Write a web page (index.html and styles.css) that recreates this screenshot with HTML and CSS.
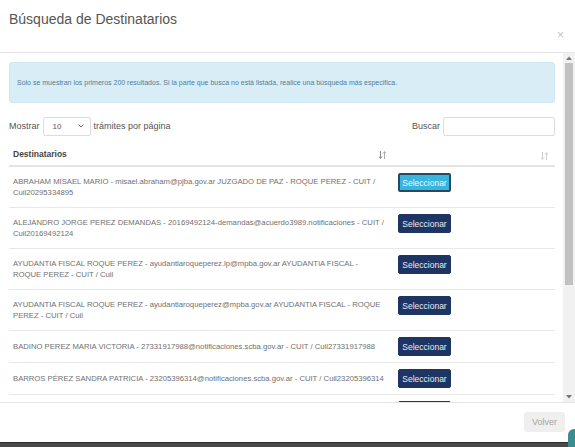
FILE: index.html
```html
<!DOCTYPE html>
<html lang="es">
<head>
<meta charset="utf-8">
<title>Búsqueda de Destinatarios</title>
<link rel="stylesheet" href="styles.css">
</head>
<body>
<div class="modal">
  <div class="modal-header">
    <h4 class="modal-title">Búsqueda de Destinatarios</h4>
    <span class="close">×</span>
  </div>
  <div class="modal-body-wrap">
    <div class="modal-body">
      <div class="alert">Solo se muestran los primeros 200 resultados. Si la parte que busca no está listada, realice una búsqueda más especifica.</div>
      <div class="controls">
        <div class="length">
          <span>Mostrar</span>
          <span class="select"><span>10</span>
            <svg class="chev" width="6" height="4" viewBox="0 0 6 4"><path d="M0.6 0.6 L3 3 L5.4 0.6" fill="none" stroke="#666" stroke-width="1"/></svg>
          </span>
          <span>trámites por página</span>
        </div>
        <div class="search">
          <span>Buscar</span>
          <span class="input"></span>
        </div>
      </div>
      <table class="table">
        <thead>
          <tr>
            <th class="col-name">Destinatarios
              <svg class="sort" width="7" height="8" viewBox="0 0 7 8"><path d="M1.5 0 V7 M0 5.5 L1.5 7.5 L3 5.5" fill="none" stroke="#888" stroke-width="1"/><path d="M5.5 8 V1 M4 2.5 L5.5 0.5 L7 2.5" fill="none" stroke="#aaa" stroke-width="1"/></svg>
            </th>
            <th class="col-btn">
              <svg class="sort light" width="7" height="8" viewBox="0 0 7 8"><path d="M1.5 0 V7 M0 5.5 L1.5 7.5 L3 5.5" fill="none" stroke="#d0d0d0" stroke-width="1"/><path d="M5.5 8 V1 M4 2.5 L5.5 0.5 L7 2.5" fill="none" stroke="#d0d0d0" stroke-width="1"/></svg>
            </th>
          </tr>
        </thead>
        <tbody>
          <tr>
            <td class="name">ABRAHAM MISAEL MARIO - misael.abraham@pjba.gov.ar JUZGADO DE PAZ - ROQUE PEREZ - CUIT / Cuil20295334895</td>
            <td class="act"><button class="btn btn-active">Seleccionar</button></td>
          </tr>
          <tr>
            <td class="name">ALEJANDRO JORGE PEREZ DEMANDAS - 20169492124-demandas@acuerdo3989.notificaciones - CUIT / Cuil20169492124</td>
            <td class="act"><button class="btn">Seleccionar</button></td>
          </tr>
          <tr>
            <td class="name">AYUDANTIA FISCAL ROQUE PEREZ - ayudantiaroqueperez.lp@mpba.gov.ar AYUDANTIA FISCAL - ROQUE PEREZ - CUIT / Cuil</td>
            <td class="act"><button class="btn">Seleccionar</button></td>
          </tr>
          <tr>
            <td class="name">AYUDANTIA FISCAL ROQUE PEREZ - ayudantiaroqueperez@mpba.gov.ar AYUDANTIA FISCAL - ROQUE PEREZ - CUIT / Cuil</td>
            <td class="act"><button class="btn">Seleccionar</button></td>
          </tr>
          <tr>
            <td class="name">BADINO PEREZ MARIA VICTORIA - 27331917988@notificaciones.scba.gov.ar - CUIT / Cuil27331917988</td>
            <td class="act"><button class="btn">Seleccionar</button></td>
          </tr>
          <tr>
            <td class="name">BARROS PÉREZ SANDRA PATRICIA - 23205396314@notificaciones.scba.gov.ar - CUIT / Cuil23205396314</td>
            <td class="act"><button class="btn">Seleccionar</button></td>
          </tr>
          <tr>
            <td class="name">&nbsp;</td>
            <td class="act"><span class="btn btn-peek"></span></td>
          </tr>
        </tbody>
      </table>
    </div>
    <div class="scrollbar">
      <span class="sb-btn"><svg width="6" height="4" viewBox="0 0 6 4"><path d="M0 4 L3 0.5 L6 4 Z" fill="#777"/></svg></span>
      <span class="sb-thumb"></span>
      <span class="sb-track"></span>
      <span class="sb-btn"><svg width="6" height="4" viewBox="0 0 6 4"><path d="M0 0 L3 3.5 L6 0 Z" fill="#777"/></svg></span>
    </div>
  </div>
  <div class="modal-footer">
    <button class="btn-default">Volver</button>
  </div>
</div>
<div class="widget"></div>
</body>
</html>
```
FILE: styles.css
```css
html, body {
  margin: 0;
  padding: 0;
}
body {
  background: #4a4a4a;
  font-family: "Liberation Sans", Arial, sans-serif;
  width: 575px;
  height: 447px;
  overflow: hidden;
  position: relative;
}
.modal {
  background: #fff;
  height: 443px;
  width: 575px;
  display: flex;
  flex-direction: column;
}
.modal-header {
  box-sizing: border-box;
  height: 53px;
  border-bottom: 1px solid #e5e5e5;
  display: flex;
  justify-content: space-between;
  align-items: flex-start;
  padding: 9px 11px 0 9px;
}
.modal-title {
  margin: 0;
  font-size: 14px;
  line-height: 20px;
  font-weight: normal;
  color: #555;
}
.close {
  margin-top: 20px;
  font-size: 12px;
  line-height: 12px;
  color: #c4c4c4;
}
.modal-body-wrap {
  display: flex;
  height: 349px;
}
.modal-body {
  flex: 1;
  padding: 9px 8px 0 9px;
  overflow: hidden;
}
.scrollbar {
  width: 12px;
  background: #f1f1f1;
  display: flex;
  flex-direction: column;
}
.sb-btn {
  height: 10px;
  display: flex;
  align-items: center;
  justify-content: center;
}
.sb-thumb {
  height: 222px;
  margin: 0 2px;
  background: #c1c1c1;
}
.sb-track {
  flex: 1;
}
.alert {
  box-sizing: border-box;
  height: 41px;
  display: flex;
  align-items: center;
  padding: 0 7px;
  background: #d9edf7;
  border: 1px solid #cfe8f2;
  border-radius: 3px;
  color: #4f7e98;
  font-size: 7px;
  margin-bottom: 13px;
}
.controls {
  display: flex;
  justify-content: space-between;
  align-items: center;
  height: 20px;
  font-size: 9px;
  color: #555;
}
.length, .search {
  display: flex;
  align-items: center;
  gap: 3px;
}
.select {
  box-sizing: border-box;
  width: 48px;
  height: 19px;
  border: 1px solid #ddd;
  border-radius: 2px;
  display: flex;
  align-items: center;
  justify-content: space-between;
  padding: 0 6px 0 9px;
  font-size: 8px;
  color: #555;
}
.input {
  box-sizing: border-box;
  width: 112px;
  height: 19px;
  border: 1px solid #ddd;
  border-radius: 2px;
}
.table {
  width: 546px;
  margin-top: 6px;
  border-collapse: collapse;
  table-layout: fixed;
}
.table th {
  text-align: left;
  font-size: 8.5px;
  line-height: 11px;
  font-weight: bold;
  color: #444;
  padding: 7px 4px 5px 4px;
  border-bottom: 2px solid #e4e4e4;
}
.col-name {
  width: 373px;
}
.col-btn {
  padding-right: 7px !important;
}
.sort {
  float: right;
  margin-top: 2px;
}
.table td {
  border-bottom: 1px solid #e8e8e8;
}
.name {
  font-size: 7.7px;
  line-height: 11px;
  color: #707070;
  padding: 9px 4px 9px 4px;
  vertical-align: middle;
}
.act {
  vertical-align: top;
  padding: 6px 8px;
}
.btn {
  display: block;
  box-sizing: border-box;
  width: 53px;
  height: 19px;
  padding: 0;
  border: 1px solid #1e3462;
  border-radius: 2px;
  background: #1e3462;
  color: #e6ebf3;
  font-family: "Liberation Sans", Arial, sans-serif;
  font-size: 8.5px;
}
.btn-active {
  background: #37b5df;
  border: 2px solid #2c4860;
  color: #eaf7fc;
}
.modal-footer {
  flex: 1;
  border-top: 1px solid #e5e5e5;
  display: flex;
  justify-content: flex-end;
  align-items: flex-start;
  padding: 9px 10px 0 0;
  border-bottom: 1px solid #2e2e2e;
}
.btn-default {
  box-sizing: border-box;
  width: 41px;
  height: 20px;
  padding: 0;
  border: none;
  border-radius: 3px;
  background: #efefef;
  color: #a5a5a5;
  font-family: "Liberation Sans", Arial, sans-serif;
  font-size: 9px;
}
.widget {
  position: absolute;
  right: 0;
  bottom: 0;
  width: 7px;
  height: 18px;
  background: #3b8c8e;
  border-top-left-radius: 6px;
}
```
